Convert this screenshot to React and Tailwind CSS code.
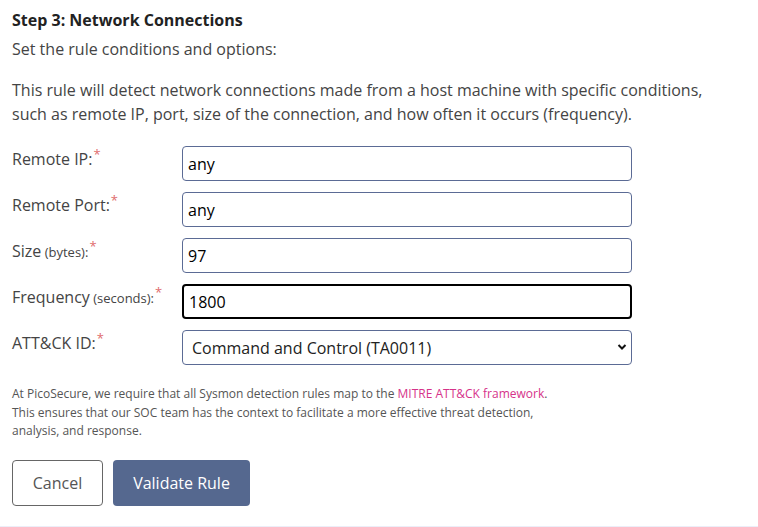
import { useState } from "react";

const fields = [
  { id: "ip", label: "Remote IP:", value: "any" },
  { id: "port", label: "Remote Port:", value: "any" },
  { id: "size", label: "Size", unit: "(bytes)", value: "97" },
  { id: "freq", label: "Frequency", unit: "(seconds)", value: "1800", focused: true },
];

function Label({ text, unit }) {
  return (
    <label className="w-[170px] shrink-0 pt-[1px] text-[16px] leading-[24px] text-[#444]">
      {text}
      {unit && <span className="text-[13px]"> {unit}:</span>}
      <span className="relative -top-[6px] ml-[1px] text-[13px] text-[#e06c6c]">*</span>
    </label>
  );
}

export default function App() {
  const [values, setValues] = useState(
    Object.fromEntries(fields.map((f) => [f.id, f.value]))
  );

  return (
    <main
      className="min-h-[527px] w-[758px] bg-white"
      style={{ fontFamily: '"Open Sans", sans-serif' }}
    >
      <div className="border-b border-[#eceef8] px-3 pt-2 pb-5">
        <h2 className="text-[16px] font-bold leading-[24px] text-[#222]">
          Step 3: Network Connections
        </h2>
        <p className="mt-[5px] text-[16px] leading-[24px] text-[#444]">
          Set the rule conditions and options:
        </p>
        <p className="mt-[17px] max-w-[695px] text-[16px] leading-[24px] text-[#444]">
          This rule will detect network connections made from a host machine with specific conditions,
          such as remote IP, port, size of the connection, and how often it occurs (frequency).
        </p>

        <div className="mt-[20px] flex flex-col gap-[11px]">
          {fields.map((f) => (
            <div key={f.id} className="flex items-start">
              <Label text={f.label} unit={f.unit} />
              <input
                value={values[f.id]}
                onChange={(e) => setValues({ ...values, [f.id]: e.target.value })}
                className={`h-[35px] w-[450px] rounded-[4px] px-[5px] text-[16px] text-black outline-none ${
                  f.focused
                    ? "border-2 border-black"
                    : "border border-[#5b6b95]"
                }`}
              />
            </div>
          ))}
          <div className="flex items-start">
            <Label text="ATT&CK ID:" />
            <div className="relative h-[35px] w-[450px]">
              <select className="h-full w-full appearance-none rounded-[4px] border border-[#5b6b95] bg-white px-[9px] text-[16px] text-[#222] outline-none">
                <option>Command and Control (TA0011)</option>
              </select>
              <svg
                className="pointer-events-none absolute right-[5px] top-[13px]"
                width="10"
                height="8"
                viewBox="0 0 10 8"
              >
                <path d="M1.5 2 L5 5.5 L8.5 2" fill="none" stroke="#111" strokeWidth="2" />
              </svg>
            </div>
          </div>
        </div>

        <p className="mt-[20px] text-[12px] leading-[18.5px] text-[#555]">
          At PicoSecure, we require that all Sysmon detection rules map to the{" "}
          <a href="#" className="text-[#d6338a]">MITRE ATT&amp;CK framework</a>.
          <br />
          This ensures that our SOC team has the context to facilitate a more effective threat detection,
          <br />
          analysis, and response.
        </p>

        <div className="mt-[19px] flex gap-[10px]">
          <button className="h-[46px] w-[91px] rounded-[4px] border border-[#666] bg-white text-[16px] text-[#555]">
            Cancel
          </button>
          <button className="h-[46px] w-[137px] rounded-[4px] bg-[#55688f] text-[16px] text-white">
            Validate Rule
          </button>
        </div>
      </div>
    </main>
  );
}
